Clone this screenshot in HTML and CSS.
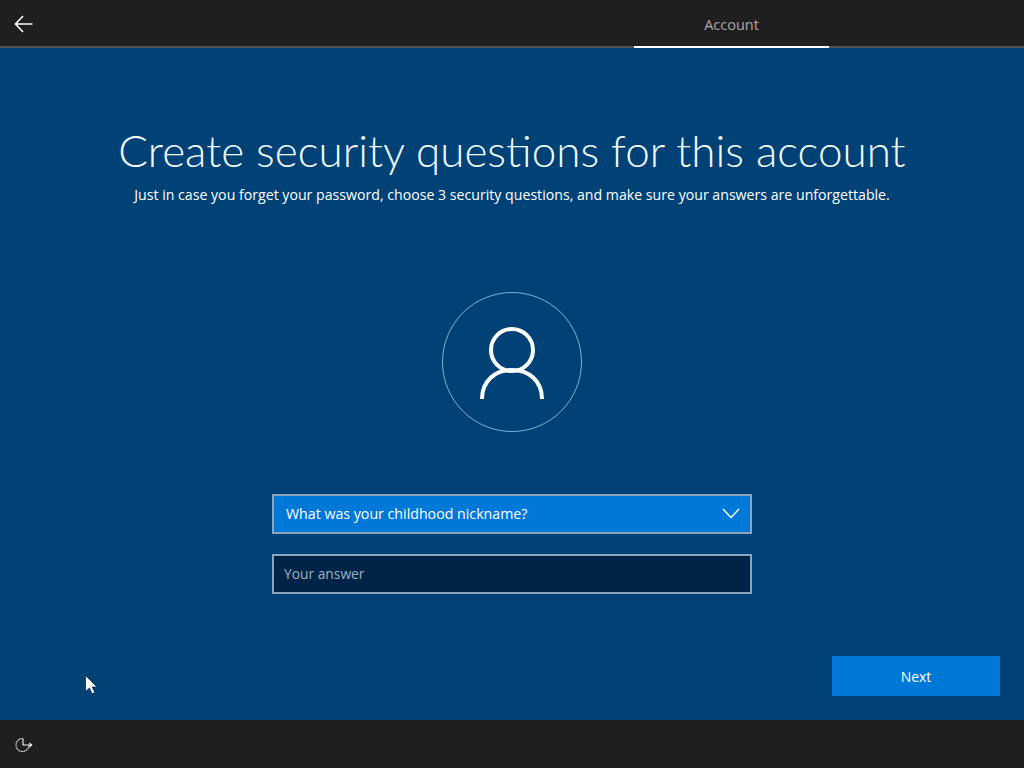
FILE: index.html
```html
<!DOCTYPE html>
<html lang="en">
<head>
<meta charset="utf-8">
<title>Create security questions</title>
<link rel="stylesheet" href="styles.css">
</head>
<body>
<div class="page">
  <header class="topbar">
    <button class="back" aria-label="Back">
      <svg width="20" height="18" viewBox="0 0 20 18"><path d="M9 1 1.500 9 9 17M1.500 9H18.500" fill="none" stroke="#fff" stroke-width="1.600"/></svg>
    </button>
    <div class="tab">Account</div>
  </header>
  <main class="main">
    <h1 class="title">Create security questions for this account</h1>
    <p class="subtitle">Just in case you forget your password, choose 3 security questions, and make sure your answers are unforgettable.</p>
    <div class="avatar">
      <svg width="64" height="72" viewBox="0 0 64 72"><circle cx="32" cy="23" r="21" fill="none" stroke="#fff" stroke-width="4"/><path d="M2 72C2 54 15 43 32 43S62 54 62 72" fill="none" stroke="#fff" stroke-width="4"/></svg>
    </div>
    <div class="select">
      <span>What was your childhood nickname?</span>
      <svg width="18" height="11" viewBox="0 0 18 11"><path d="M1 1 9 9.500 17 1" fill="none" stroke="#fff" stroke-width="1.400"/></svg>
    </div>
    <div class="answer">Your answer</div>
    <div class="actions"><button class="next">Next</button></div>
  </main>
  <footer class="bottombar">
    <svg width="18" height="16" viewBox="0 0 18 16"><path d="M7.500 1.500A6.500 6.500 0 1 0 14 8" fill="none" stroke="#e8e8e8" stroke-width="1.100" stroke-dasharray="2 .6"/><path d="M8 1.500V8H16.500M14.500 6 16.700 8 14.500 10" fill="none" stroke="#f4f4f4" stroke-width="1.100"/></svg>
  </footer>
  <svg class="cursor" width="13" height="20" viewBox="0 0 13 20"><path d="M.5.500V16.500L4.500 13 7 18.800 9.800 17.600 7.200 12H12Z" fill="#fff" stroke="#00203a" stroke-width=".7"/></svg>
</div>
</body>
</html>
```
FILE: styles.css
```css
* { box-sizing: border-box; }
html, body { margin: 0; height: 100%; }
body { font-family: "Open Sans", "Noto Sans", sans-serif; color: #fff; background: #004275; }
.page { position: relative; width: 1024px; height: 768px; display: flex; flex-direction: column; overflow: hidden; }
.topbar { height: 48px; flex: none; display: flex; justify-content: space-between; background: #1f1f1f; border-bottom: 2px solid #555; }
.back { width: 48px; height: 48px; padding: 0 0 1px; background: none; border: 0; display: flex; align-items: center; justify-content: center; }
.tab { width: 195px; height: 48px; margin-right: 195px; text-align: center; font-size: 14.500px; line-height: 50px; color: #a9a9a9; border-bottom: 2px solid #fff; }
.main { flex: 1; display: flex; flex-direction: column; align-items: center; padding-top: 74px; background: #004275; }
.title { margin: 0; font-family: Lato, "Open Sans", sans-serif; font-size: 44px; font-weight: 300; line-height: 56px; white-space: nowrap; color: #f2fbff; }
.subtitle { margin: 7px 0 0; font-size: 14.150px; line-height: 20px; white-space: nowrap; }
.avatar { width: 140px; height: 140px; margin-top: 87px; border: 1px solid #7fb3da; border-radius: 50%; display: flex; align-items: center; justify-content: center; padding-top: 2px; }
.select { width: 480px; height: 40px; margin-top: 62px; padding: 0 10px 2px 12px; display: flex; align-items: center; justify-content: space-between; font-size: 14.200px; background: #0078d7; border: 2px solid #8aa5bf; }
.answer { width: 480px; height: 40px; margin-top: 20px; padding-left: 10px; font-size: 13.800px; line-height: 36px; color: #9fb2c4; background: #002447; border: 2px solid #8aa5bf; }
.actions { width: 100%; display: flex; justify-content: flex-end; margin-top: 62px; padding-right: 24px; }
.next { width: 168px; height: 40px; border: 0; background: #0078d7; color: #fff; font: inherit; font-size: 14px; }
.bottombar { height: 48px; flex: none; display: flex; align-items: center; padding: 2px 0 0 15px; background: #1f1f1f; }
.cursor { position: absolute; left: 85px; top: 675px; }
```
